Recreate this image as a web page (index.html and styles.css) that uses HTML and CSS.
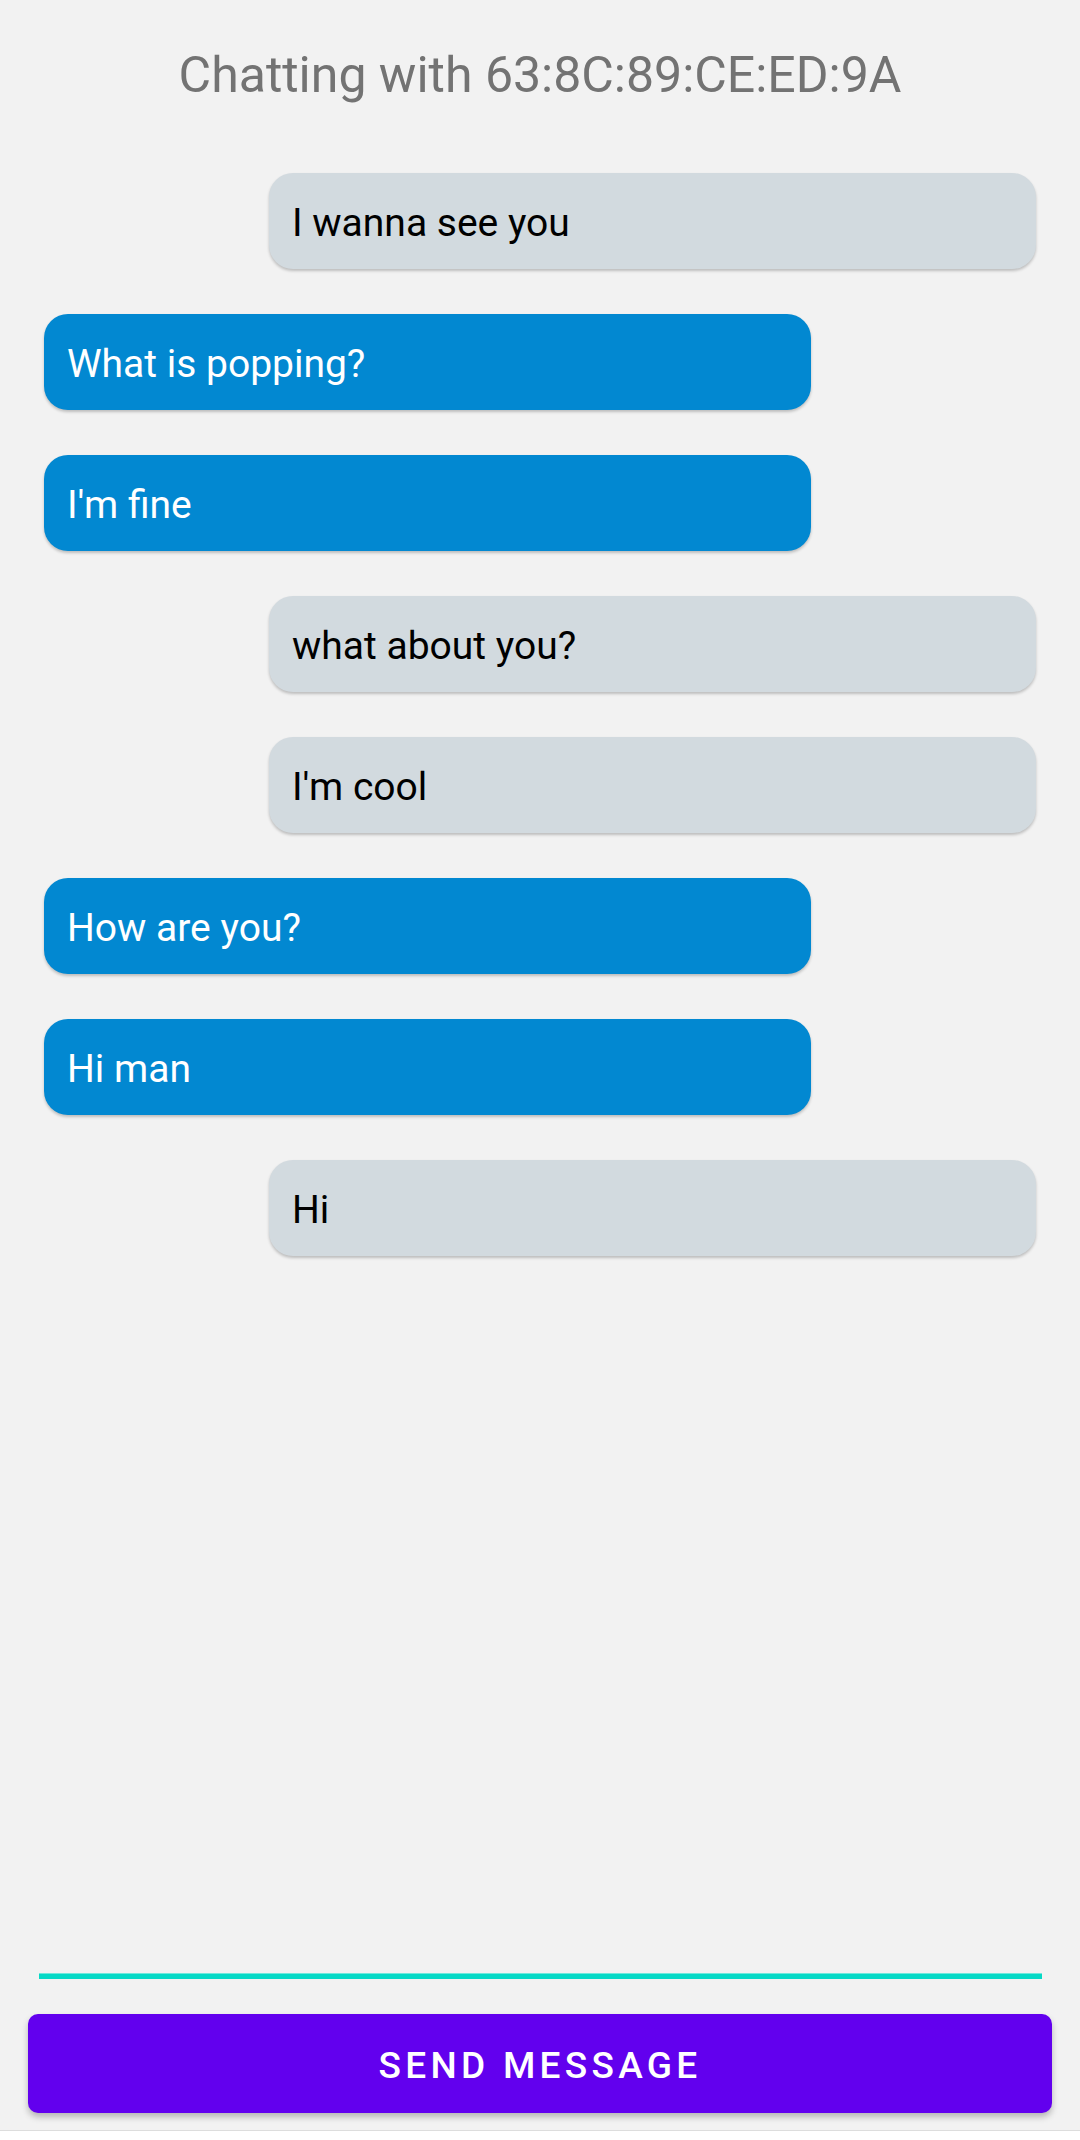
FILE: index.html
```html
<!DOCTYPE html>
<html lang="en">
<head>
<meta charset="utf-8">
<title>Chat</title>
<link rel="stylesheet" href="styles.css">
</head>
<body>
<div class="screen">
  <h1 class="title">Chatting with 63:8C:89:CE:ED:9A</h1>
  <div class="messages">
    <div class="bubble theirs">I wanna see you</div>
    <div class="bubble mine">What is popping?</div>
    <div class="bubble mine">I'm fine</div>
    <div class="bubble theirs">what about you?</div>
    <div class="bubble theirs">I'm cool</div>
    <div class="bubble mine">How are you?</div>
    <div class="bubble mine">Hi man</div>
    <div class="bubble theirs">Hi</div>
  </div>
  <div class="composer">
    <div class="input-line"></div>
    <button class="send">SEND MESSAGE</button>
  </div>
  <div class="navstrip"></div>
</div>
</body>
</html>
```
FILE: styles.css
```css
html, body {
  margin: 0;
  padding: 0;
}
body {
  background: #f2f2f2;
  font-family: Roboto, "Noto Sans", "Liberation Sans", sans-serif;
}
.screen {
  height: 2140px;
  display: flex;
  flex-direction: column;
  background: #f2f2f2;
}
.title {
  margin: 0;
  padding-top: 46px;
  font-size: 50px;
  line-height: 59px;
  font-weight: 400;
  color: #737373;
  text-align: center;
}
.messages {
  flex: 1;
  display: flex;
  flex-direction: column;
  gap: 45px;
  padding: 68px 44px 0 44px;
}
.bubble {
  box-sizing: border-box;
  width: 767px;
  height: 96px;
  padding: 27px 23px 0 23px;
  border-radius: 24px;
  font-size: 39px;
  line-height: 46px;
  box-shadow: 0 2px 3px rgba(0, 0, 0, 0.22);
  white-space: nowrap;
}
.theirs {
  align-self: flex-end;
  background: #d2dadf;
  color: #000000;
}
.mine {
  align-self: flex-start;
  background: #0288d1;
  color: #ffffff;
}
.composer {
  display: flex;
  flex-direction: column;
  padding-bottom: 17px;
}
.input-line {
  height: 5px;
  margin: 0 38px 0 39px;
  background: #06d9c6;
  border-top: 1px solid #6fe8dc;
}
.send {
  margin: 35px 28px 0 28px;
  height: 99px;
  border: none;
  border-radius: 10px;
  background: #6200ee;
  color: #ffffff;
  font-family: Roboto, "Noto Sans", sans-serif;
  font-size: 37px;
  font-weight: 500;
  letter-spacing: 4.3px;
  box-shadow: 0 4px 6px rgba(0, 0, 0, 0.25);
  padding: 4px 0 0 0;
}
.navstrip {
  height: 10px;
  background: #ffffff;
  border-top: 1px solid #dddddd;
  box-sizing: border-box;
}
```
